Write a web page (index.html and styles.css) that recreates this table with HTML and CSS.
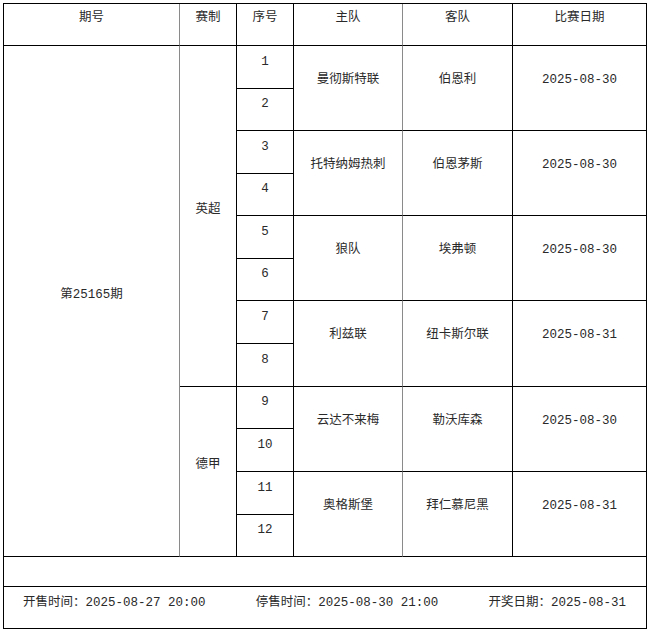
FILE: index.html
```html
<!DOCTYPE html>
<html lang="zh-CN">
<head>
<meta charset="utf-8">
<title>第25165期</title>
<link rel="stylesheet" href="styles.css">
</head>
<body>
<div class="sheet">
  <div class="cell head c1">期号</div>
  <div class="cell head c2">赛制</div>
  <div class="cell head c3">序号</div>
  <div class="cell head c4">主队</div>
  <div class="cell head c5">客队</div>
  <div class="cell head c6">比赛日期</div>

  <div class="cell period c1">第25165期</div>
  <div class="cell league c2 span8">英超</div>
  <div class="cell seq c3">1</div>
  <div class="cell team c4 span2">曼彻斯特联</div>
  <div class="cell team c5 span2">伯恩利</div>
  <div class="cell team c6 span2">2025-08-30</div>
  <div class="cell seq c3">2</div>

  <div class="cell seq c3">3</div>
  <div class="cell team c4 span2">托特纳姆热刺</div>
  <div class="cell team c5 span2">伯恩茅斯</div>
  <div class="cell team c6 span2">2025-08-30</div>
  <div class="cell seq c3">4</div>

  <div class="cell seq c3">5</div>
  <div class="cell team c4 span2">狼队</div>
  <div class="cell team c5 span2">埃弗顿</div>
  <div class="cell team c6 span2">2025-08-30</div>
  <div class="cell seq c3">6</div>

  <div class="cell seq c3">7</div>
  <div class="cell team c4 span2">利兹联</div>
  <div class="cell team c5 span2">纽卡斯尔联</div>
  <div class="cell team c6 span2">2025-08-31</div>
  <div class="cell seq c3">8</div>

  <div class="cell league c2 span4">德甲</div>
  <div class="cell seq c3">9</div>
  <div class="cell team c4 span2">云达不来梅</div>
  <div class="cell team c5 span2">勒沃库森</div>
  <div class="cell team c6 span2">2025-08-30</div>
  <div class="cell seq c3">10</div>

  <div class="cell seq c3">11</div>
  <div class="cell team c4 span2">奥格斯堡</div>
  <div class="cell team c5 span2">拜仁慕尼黑</div>
  <div class="cell team c6 span2">2025-08-31</div>
  <div class="cell seq c3">12</div>

  <div class="cell blank full"></div>
  <div class="cell foot full">
    <span>开售时间：2025-08-27 20:00</span>
    <span>停售时间：2025-08-30 21:00</span>
    <span>开奖日期：2025-08-31</span>
  </div>
</div>
</body>
</html>
```

FILE: styles.css
```css
html, body {
  margin: 0;
  padding: 0;
  background: #fff;
}

.sheet {
  display: grid;
  width: max-content;
  margin: 3px;
  grid-template-columns: 176px 57px 57px 109px 110px 134px;
  grid-template-rows: 42px 43px 42px 43px 42px 43px 42px 43px 43px 42px 43px 43px 42px 30px 42px;
  border-left: 1px solid #000;
  border-top: 1px solid #000;
  font-family: "Liberation Mono", "Noto Sans CJK SC", monospace;
  font-size: 12.5px;
  color: #2a2a2a;
}

.cell {
  box-sizing: border-box;
  border-right: 1px solid #000;
  border-bottom: 1px solid #000;
  display: flex;
  align-items: center;
  justify-content: center;
  white-space: nowrap;
  line-height: 1;
}

.c1 { grid-column: 1; border-right-color: #8a8a8a; }
.c2 { grid-column: 2; }
.c3 { grid-column: 3; }
.c4 { grid-column: 4; border-right-color: #8a8a8a; }
.c5 { grid-column: 5; }
.c6 { grid-column: 6; }

.span2 { grid-row: span 2; }
.span4 { grid-row: span 4; }
.span8 { grid-row: span 8; }
.period { grid-row: span 12; padding-bottom: 11px; }

.head { padding-bottom: 13px; }
.seq { padding-bottom: 10px; }
.team { padding-bottom: 16px; }
.league { padding-bottom: 12px; }

.full { grid-column: 1 / -1; }

.foot {
  justify-content: space-between;
  padding: 0 20px 9px 19px;
}
```
